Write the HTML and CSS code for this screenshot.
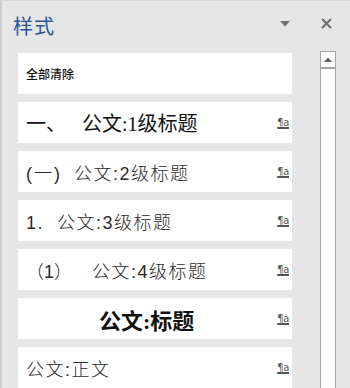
FILE: index.html
```html
<!DOCTYPE html>
<html lang="zh-CN">
<head>
<meta charset="utf-8">
<link rel="stylesheet" href="styles.css">
</head>
<body>
<div class="pane">
  <header class="head">
    <h1 class="title">样式</h1>
    <svg class="drop" width="10" height="6" viewBox="0 0 10 6"><path d="M0 0H10L5 5.5Z" fill="#6f6f6f"/></svg>
    <svg class="close" width="11" height="11" viewBox="0 0 11 11"><path d="M1 1L10 10M10 1L1 10" stroke="#6f6f6f" stroke-width="2"/></svg>
  </header>
  <div class="body">
    <ul class="styles">
      <li class="card"><span class="name clear">全部清除</span></li>
      <li class="card"><span class="name h1"><span class="pre p1">一、</span>公文:1级标题</span><span class="mark">¶a</span></li>
      <li class="card"><span class="name lv"><span class="pre p2">(一)</span>公文:2级标题</span><span class="mark">¶a</span></li>
      <li class="card"><span class="name lv"><span class="pre p3">1.</span>公文:3级标题</span><span class="mark">¶a</span></li>
      <li class="card"><span class="name lv"><span class="pre p4">（1）</span>公文:4级标题</span><span class="mark">¶a</span></li>
      <li class="card"><span class="name ht">公文:标题</span><span class="mark">¶a</span></li>
      <li class="card"><span class="name lv">公文:正文</span><span class="mark">¶a</span></li>
    </ul>
    <div class="scrollbar">
      <div class="sb-up"><svg width="8" height="5" viewBox="0 0 8 5"><path d="M0 5H8L4 0.5Z" fill="#606060"/></svg></div>
    </div>
  </div>
</div>
</body>
</html>
```
FILE: styles.css
```css
html, body {
  margin: 0;
  padding: 0;
  background: #e6e6e6;
}
.pane {
  width: 350px;
  height: 388px;
  overflow: hidden;
  box-sizing: border-box;
  border-left: 2px solid #cdcdcd;
  border-top: 1px solid #d6d6d6;
  background: #e6e6e6;
  font-family: "Noto Sans CJK SC", sans-serif;
}
.head {
  height: 44px;
  display: flex;
  align-items: flex-start;
}
.title {
  margin: 11px 0 0 11px;
  font-size: 20px;
  line-height: 28px;
  font-weight: 400;
  color: #2b579a;
  letter-spacing: 1px;
}
.drop {
  margin: 20px 0 0 auto;
}
.close {
  margin: 17px 18px 0 31px;
}
.body {
  display: flex;
  align-items: flex-start;
  padding-left: 16px;
}
.styles {
  list-style: none;
  margin: 0;
  padding: 8px 0 0 0;
  width: 274px;
}
.card {
  height: 41px;
  margin-bottom: 8px;
  background: #ffffff;
  display: flex;
  align-items: center;
  padding: 0 3px 0 8px;
  box-sizing: border-box;
}
.name {
  flex: 1;
  white-space: nowrap;
  color: #222;
}
.pre {
  display: inline-block;
}
.clear {
  font-size: 12px;
  font-weight: 500;
  color: #111;
}
.h1 {
  font-family: "Liberation Serif", "Noto Sans CJK SC", serif;
  font-size: 20px;
  font-weight: 400;
  color: #111;
}
.p1 {
  width: 56px;
  font-family: "Noto Sans CJK SC", sans-serif;
}
.lv {
  font-family: "Liberation Sans", "Noto Sans CJK SC", sans-serif;
  font-size: 18px;
  font-weight: 300;
  color: #2a2a2a;
  letter-spacing: 1.5px;
}
.p2 {
  width: 48px;
  letter-spacing: 2px;
}
.p3 {
  width: 31px;
}
.p4 {
  width: 66px;
  letter-spacing: 0;
}
.ht {
  text-align: center;
  font-family: "Liberation Serif", "Noto Sans CJK SC", serif;
  font-size: 22px;
  font-weight: 700;
  color: #111;
  padding-right: 10px;
}
.mark {
  font-family: "DejaVu Sans Condensed", "DejaVu Sans", sans-serif;
  font-size: 11px;
  font-weight: 400;
  color: #555;
  text-decoration: underline;
  text-decoration-thickness: 2px;
  text-underline-offset: 1px;
  letter-spacing: -0.3px;
}
.scrollbar {
  margin: 6px 0 0 28px;
  width: 16px;
  height: 340px;
  box-sizing: border-box;
  border: 1px solid #a6a6a6;
  background: #fff;
}
.sb-up {
  height: 15px;
  border-bottom: 2px solid #a6a6a6;
  display: flex;
  align-items: center;
  justify-content: center;
}
```
